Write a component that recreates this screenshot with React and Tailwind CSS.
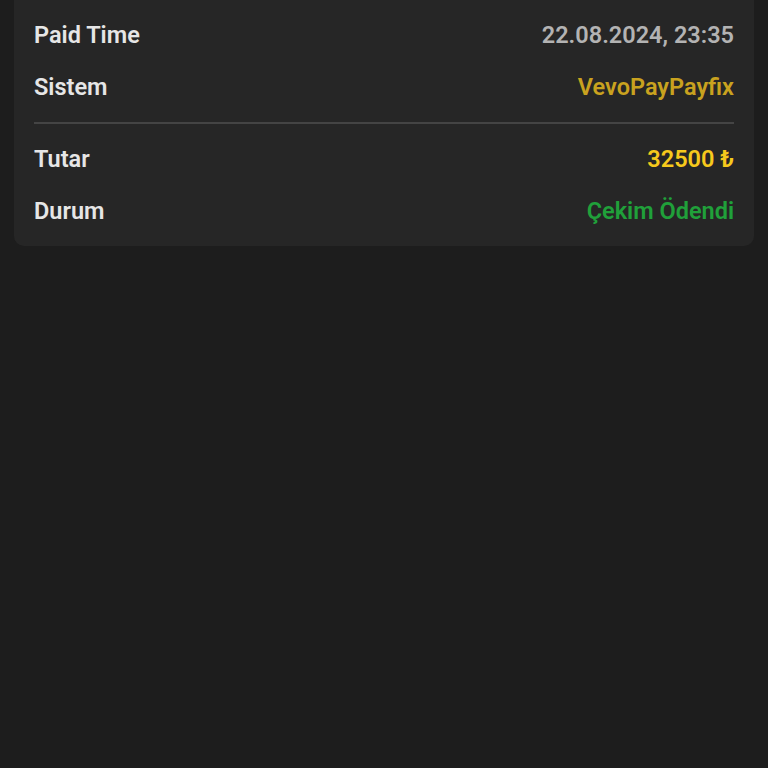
import React from 'react';

const Row = ({ label, value, valueClass }) => (
  <div className="flex h-[52px] items-center justify-between">
    <span className="text-[23.5px] font-semibold text-[#e6e6e6]">{label}</span>
    <span className={`text-[23.5px] font-semibold ${valueClass}`}>{value}</span>
  </div>
);

const App = () => {
  return (
    <div
      className="flex h-screen flex-col overflow-hidden bg-[#1d1d1d] px-[14px]"
      style={{ fontFamily: 'Roboto, "Noto Sans", sans-serif' }}
    >
      <div className="mt-[-20px] rounded-[10px] bg-[#262626] px-5 pt-[30px] pb-2">
        <Row label="Paid Time" value="22.08.2024, 23:35" valueClass="text-[#b3b3b3]" />
        <Row label="Sistem" value="VevoPayPayfix" valueClass="text-[#c9a21f]" />
        <div className="mt-2 mb-[10px] h-[2px] bg-[#444444]" />
        <Row label="Tutar" value="32500 ₺" valueClass="font-bold text-[#f6c91c]" />
        <Row label="Durum" value="Çekim Ödendi" valueClass="text-[#20a03a]" />
      </div>
    </div>
  );
};

export default App;
